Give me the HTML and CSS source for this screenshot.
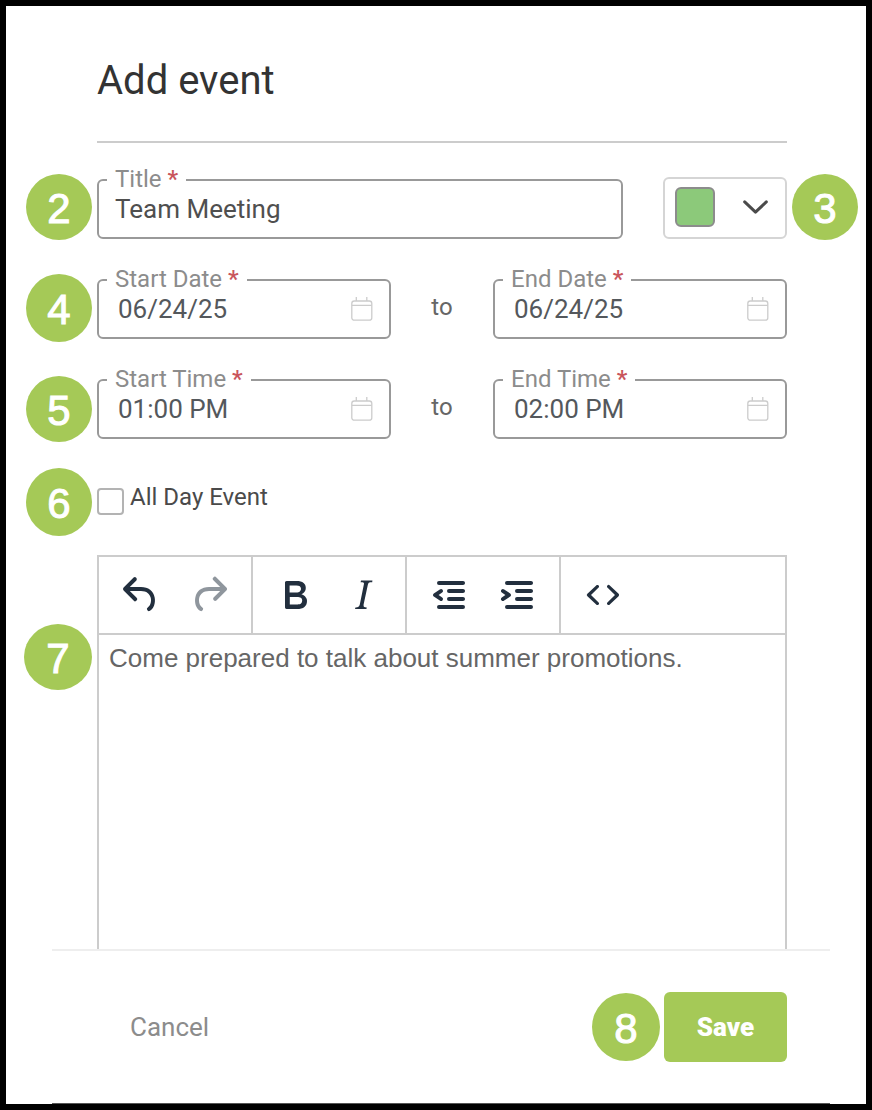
FILE: index.html
```html
<!DOCTYPE html>
<html lang="en">
<head>
<meta charset="utf-8">
<meta name="viewport" content="width=device-width, initial-scale=1">
<title>Add event</title>
<link rel="stylesheet" href="styles.css">
</head>
<body>
<svg class="sprite" aria-hidden="true">
  <symbol id="calendar" viewBox="0 0 22 24">
    <rect x=".8" y="4" width="20" height="19.2" rx="2.5" fill="none" stroke="currentColor" stroke-width="1.3"/>
    <path d="M.8 8.3H20.8M5.3 0V4M15.8 0V4" fill="none" stroke="currentColor" stroke-width="1.3"/>
  </symbol>
</svg>
<main class="dialog">
  <header class="header">
    <h1 class="heading">Add event</h1>
  </header>
  <form class="form" id="event-form">
    <div class="row row-title">
      <span class="badge badge-left">2</span>
      <div class="field">
        <label class="field-label" for="title">Title <span class="required">*</span></label>
        <input class="field-input" id="title" type="text" value="Team Meeting">
      </div>
      <button class="color-picker" type="button" aria-label="Event color">
        <span class="swatch"></span>
        <svg class="chevron" viewBox="0 0 25 14" aria-hidden="true"><path d="M1.7 1.9 12.5 12.2 23.3 1.9" fill="none" stroke="currentColor" stroke-width="3" stroke-linecap="round" stroke-linejoin="round"/></svg>
      </button>
      <span class="badge badge-right">3</span>
    </div>
    <div class="row row-range">
      <span class="badge badge-left badge-date">4</span>
      <div class="field field-picker">
        <label class="field-label" for="start-date">Start Date <span class="required">*</span></label>
        <input class="field-input" id="start-date" type="text" value="06/24/25">
        <svg class="calendar"><use href="#calendar"/></svg>
      </div>
      <span class="to">to</span>
      <div class="field field-picker">
        <label class="field-label" for="end-date">End Date <span class="required">*</span></label>
        <input class="field-input" id="end-date" type="text" value="06/24/25">
        <svg class="calendar"><use href="#calendar"/></svg>
      </div>
    </div>
    <div class="row row-range">
      <span class="badge badge-left">5</span>
      <div class="field field-picker">
        <label class="field-label" for="start-time">Start Time <span class="required">*</span></label>
        <input class="field-input" id="start-time" type="text" value="01:00 PM">
        <svg class="calendar"><use href="#calendar"/></svg>
      </div>
      <span class="to">to</span>
      <div class="field field-picker">
        <label class="field-label" for="end-time">End Time <span class="required">*</span></label>
        <input class="field-input" id="end-time" type="text" value="02:00 PM">
        <svg class="calendar"><use href="#calendar"/></svg>
      </div>
    </div>
    <div class="row row-check">
      <span class="badge badge-left badge-check">6</span>
      <input class="checkbox" id="all-day" type="checkbox">
      <label class="check-label" for="all-day">All Day Event</label>
    </div>
    <div class="editor">
      <span class="badge badge-left badge-editor">7</span>
      <div class="toolbar" role="toolbar" aria-label="Formatting">
        <div class="group">
          <button class="tool" type="button" aria-label="Undo"><svg viewBox="0 0 24 24"><path d="M6.4 8H12c3.7 0 6.2 2 6.8 5.1.6 2.7-.4 5.6-2.3 6.8a1 1 0 0 1-1-1.8c1.1-.6 1.8-2.7 1.4-4.6-.5-2.1-2.1-3.5-4.9-3.5H6.4l3.3 3.3a1 1 0 1 1-1.4 1.4l-5-5a1 1 0 0 1 0-1.4l5-5a1 1 0 0 1 1.4 1.4L6.4 8Z"/></svg></button>
          <button class="tool" type="button" aria-label="Redo" disabled><svg viewBox="0 0 24 24"><path d="M17.6 10H12c-2.8 0-4.4 1.4-4.9 3.5-.4 2 .3 4 1.4 4.6a1 1 0 1 1-1 1.8c-2-1.2-2.9-4.1-2.3-6.8.6-3 3-5.1 6.8-5.1h5.6l-3.3-3.3a1 1 0 1 1 1.4-1.4l5 5a1 1 0 0 1 0 1.4l-5 5a1 1 0 0 1-1.4-1.4l3.3-3.3Z"/></svg></button>
        </div>
        <div class="group">
          <button class="tool" type="button" aria-label="Bold"><svg viewBox="0 0 24 24"><path fill-rule="evenodd" d="M7.8 19c-.3 0-.5 0-.6-.2l-.2-.5V5.7c0-.2 0-.4.2-.5l.6-.2h5c1.5 0 2.7.3 3.5 1 .7.6 1.1 1.4 1.1 2.5a3 3 0 0 1-.6 1.9c-.4.6-1 1-1.6 1.2.4.1.9.3 1.3.6s.8.7 1 1.2c.4.4.5 1 .5 1.6 0 1.3-.4 2.3-1.3 3-.8.7-2.1 1-3.8 1H7.8Zm5-8.3c.6 0 1.2-.1 1.6-.5.4-.3.6-.7.6-1.3 0-1.1-.8-1.7-2.3-1.7H9.3v3.5h3.4Zm.5 6c.7 0 1.3-.1 1.7-.4.4-.4.6-.9.6-1.5s-.2-1-.7-1.4c-.4-.3-1-.4-2-.4H9.4v3.8h4Z"/></svg></button>
          <button class="tool" type="button" aria-label="Italic"><svg viewBox="0 0 24 24"><path d="m16.7 4.7-.1.9h-.3c-.6 0-1 0-1.4.3-.3.3-.4.6-.5 1.1l-2.1 9.8v.6c0 .5.4.8 1.4.8h.2l-.2.8H8l.2-.8h.2c1.1 0 1.8-.5 2-1.5l2-9.8.1-.5c0-.6-.4-.8-1.4-.8h-.3l.2-.9h5.8Z"/></svg></button>
        </div>
        <div class="group">
          <button class="tool" type="button" aria-label="Decrease indent"><svg viewBox="0 0 24 24"><path d="M7 5h12c.6 0 1 .4 1 1s-.4 1-1 1H7a1 1 0 1 1 0-2Zm5 4h7c.6 0 1 .4 1 1s-.4 1-1 1h-7a1 1 0 0 1 0-2Zm0 4h7c.6 0 1 .4 1 1s-.4 1-1 1h-7a1 1 0 0 1 0-2Zm-5 4h12a1 1 0 0 1 0 2H7a1 1 0 0 1 0-2Zm1.6-3.8a1 1 0 0 1-1.2 1.6l-3-2a1 1 0 0 1 0-1.6l3-2a1 1 0 0 1 1.2 1.6L6.8 12l1.8 1.2Z"/></svg></button>
          <button class="tool" type="button" aria-label="Increase indent"><svg viewBox="0 0 24 24"><path d="M7 5h12c.6 0 1 .4 1 1s-.4 1-1 1H7a1 1 0 1 1 0-2Zm5 4h7c.6 0 1 .4 1 1s-.4 1-1 1h-7a1 1 0 0 1 0-2Zm0 4h7c.6 0 1 .4 1 1s-.4 1-1 1h-7a1 1 0 0 1 0-2Zm-5 4h12a1 1 0 0 1 0 2H7a1 1 0 0 1 0-2Zm-2.6-3.8L6.2 12l-1.8-1.2a1 1 0 0 1 1.2-1.6l3 2a1 1 0 0 1 0 1.6l-3 2a1 1 0 1 1-1.2-1.6Z"/></svg></button>
        </div>
        <div class="group">
          <button class="tool" type="button" aria-label="Source code"><svg viewBox="0 0 24 24"><path d="M9.8 15.7c.3.3.3.8 0 1-.3.4-.9.4-1.2 0l-4.4-4.1a.8.8 0 0 1 0-1.2l4.4-4.2c.3-.3.9-.3 1.2 0 .3.3.3.8 0 1.1L6 12l3.8 3.7ZM14.2 15.7c-.3.3-.3.8 0 1 .4.4.9.4 1.2 0l4.4-4.1c.3-.3.3-.9 0-1.2l-4.4-4.2a.8.8 0 0 0-1.2 0c-.3.3-.3.8 0 1.1L18 12l-3.8 3.7Z"/></svg></button>
        </div>
      </div>
      <textarea class="editor-text" aria-label="Description">Come prepared to talk about summer promotions.</textarea>
    </div>
  </form>
  <footer class="footer">
    <button class="cancel" type="button">Cancel</button>
    <div class="save-group">
      <span class="badge badge-large">8</span>
      <button class="save" type="submit" form="event-form">Save</button>
    </div>
  </footer>
</main>
</body>
</html>
```
FILE: styles.css
```css
*, *::before, *::after { box-sizing: border-box; }

body {
  margin: 0;
  background: #fff;
  color: #4a4a4a;
  font-family: Roboto, "Liberation Sans", sans-serif;
  font-size: 24px;
  line-height: 28px;
}

button, input, textarea { font: inherit; color: inherit; }
button { cursor: pointer; }
.sprite { display: none; }

.dialog {
  display: flex;
  flex-direction: column;
  min-height: 100vh;
  border: 6px solid #000;
}

.header { padding: 0 79px 0 91px; }

.heading {
  margin: 0;
  padding: 51px 0 36px;
  border-bottom: 2px solid #ccc;
  color: #333;
  font-size: 40px;
  font-weight: 400;
  line-height: 48px;
}

.form {
  display: flex;
  flex: 1;
  flex-direction: column;
  padding: 34px 79px 0 91px;
}

.row { position: relative; margin-bottom: 40px; }

.row-title {
  display: flex;
  align-items: flex-end;
  gap: 40px;
}

.row-range {
  display: grid;
  grid-template-columns: 1fr 102px 1fr;
}

.field {
  position: relative;
  display: flex;
  flex: 1;
  align-items: center;
  min-width: 0;
  height: 60px;
  border: 2px solid #999;
  border-radius: 6px;
}

.field-label {
  position: absolute;
  top: -16px;
  left: 8px;
  padding: 0 8px;
  background: #fff;
  color: #8c8c8c;
  white-space: nowrap;
}

.required { color: #c9555b; font-weight: 500; }

.field-input {
  flex: 1;
  min-width: 0;
  height: 56px;
  padding: 0 0 0 16px;
  border: 0;
  outline: 0;
  background: none;
  color: #4f4f4f;
  font-size: 26px;
}

.field-picker .field-input { padding-left: 19px; color: #54585c; }

.calendar {
  flex: none;
  width: 22px;
  height: 24px;
  margin-right: 16px;
  color: #ccc;
}

.to { padding-top: 14px; color: #666; text-align: center; }

.color-picker {
  display: flex;
  align-items: center;
  justify-content: space-between;
  width: 124px;
  height: 62px;
  padding: 0 17px 2px 10px;
  border: 2px solid #d5d5d5;
  border-radius: 6px;
  background: #fff;
  color: #4a4a4a;
}

.swatch {
  width: 40px;
  height: 40px;
  border: 2px solid #8c8c8c;
  border-radius: 6px;
  background: #8cc97a;
}

.chevron { width: 25px; height: 14px; }

.row-check {
  display: flex;
  align-items: flex-start;
  gap: 6px;
  height: 76px;
  margin-bottom: 0;
  padding-top: 4px;
}

.checkbox {
  flex: none;
  width: 27px;
  height: 27px;
  margin: 5px 0 0;
  border: 2px solid #b3b3b3;
  border-radius: 4px;
  background: #fff;
  appearance: none;
}
.checkbox:checked { background: #a5c957; }

.badge {
  display: flex;
  flex: none;
  align-items: center;
  justify-content: center;
  width: 66px;
  height: 66px;
  padding-top: 4px;
  border-radius: 50%;
  background: #a5c957;
  color: #fff;
  font-family: "Liberation Sans", Arial, sans-serif;
  font-size: 42px;
  line-height: 48px;
  -webkit-text-stroke: 1px #fff;
}
.badge-left, .badge-right { position: absolute; top: -3px; }
.badge-left { left: -71px; }
.badge-right { right: -71px; }
.badge-date { top: -5px; height: 68px; }
.badge-check { top: -11px; height: 68px; }

.editor {
  position: relative;
  display: flex;
  flex: 1;
  flex-direction: column;
  min-height: 240px;
  border: 2px solid #ccc;
  border-bottom: 0;
}
.badge-editor { top: 67px; left: -75px; width: 68px; }

.toolbar {
  display: flex;
  border-bottom: 2px solid #ccc;
}

.group { display: flex; padding: 4px 8px; border-right: 2px solid #ccc; }
.group:last-child { border-right: 0; }

.tool {
  width: 68px;
  height: 68px;
  padding: 10px;
  border: 0;
  background: none;
  color: #222f3e;
}
.tool svg { display: block; width: 48px; height: 48px; fill: currentColor; }
.tool:disabled { opacity: .5; }

.editor-text {
  flex: 1;
  width: 100%;
  padding: 7px 10px;
  border: 0;
  outline: 0;
  resize: none;
  background: none;
  color: #666;
  font-family: "Liberation Sans", Arial, sans-serif;
  font-size: 26px;
  line-height: 32px;
}

.footer {
  display: flex;
  align-items: center;
  justify-content: space-between;
  margin: 0 36px 0 46px;
  padding: 41px 43px 41px 45px;
  border-top: 2px solid #eee;
  border-bottom: 1px solid #555;
}

.cancel {
  padding: 0 33px;
  border: 0;
  background: none;
  color: #8c8c8c;
  font-size: 26px;
}

.save-group { display: flex; align-items: center; gap: 4px; }
.badge-large { width: 68px; height: 68px; }

.save {
  width: 123px;
  height: 70px;
  border: 0;
  border-radius: 6px;
  background: #a5c957;
  color: #fff;
  font-size: 26px;
  font-weight: 900;
}
```
